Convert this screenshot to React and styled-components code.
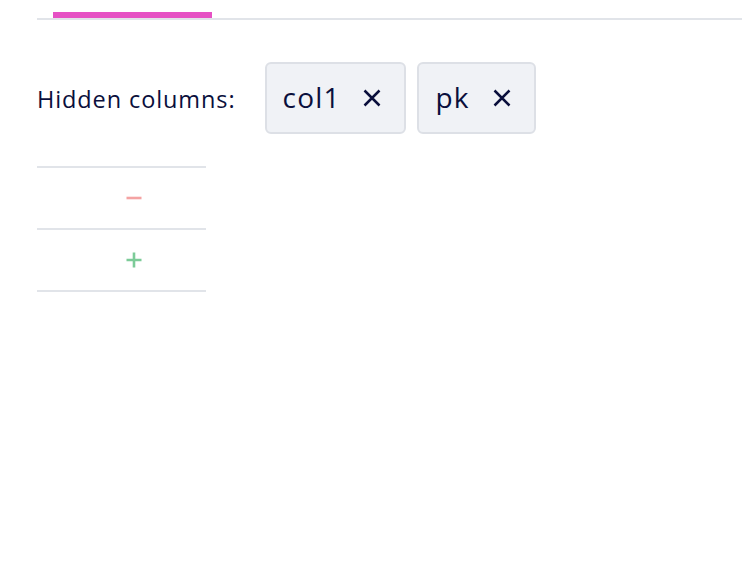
import React from "react";
import styled, { createGlobalStyle } from "styled-components";

const Global = createGlobalStyle`
	body {
		margin: 0;
		background: #fff;
		font-family: "Source Sans Pro", "Open Sans", "Noto Sans", sans-serif;
		color: #0a0f3c;
	}
`;

const S = {};
S.page = styled.div`
	width: 742px;
	height: 588px;
	padding-left: 37px;
	box-sizing: border-box;
	overflow: hidden;
`;
// tab header strip
S.tabBar = styled.div`
	display: flex;
	height: 20px;
	padding-left: 16px;
	border-bottom: 2px solid #e1e4e9;
	box-sizing: border-box;
	align-items: flex-end;
`;
S.tabIndicator = styled.div`
	width: 159px;
	height: 6px;
	background: #e651c4;
`;
S.hiddenRow = styled.div`
	display: flex;
	align-items: center;
	gap: 11px;
	margin-top: 42px;
`;
S.label = styled.span`
	font-size: 23.5px;
	letter-spacing: 0.9px;
	margin-right: 18px;
	padding-top: 1px;
`;
S.chip = styled.div`
	display: flex;
	align-items: center;
	height: 72px;
	box-sizing: border-box;
	padding: 0 23px 0 16px;
	gap: 24px;
	background: #f0f2f6;
	border: 2px solid #dde0e6;
	border-radius: 6px;
	font-size: 28px;
	letter-spacing: 1.2px;
`;
S.chipText = styled.span`
	margin-right: -1.2px;
	padding-bottom: 3px;
`;
S.close = styled.svg`
	width: 18px;
	height: 18px;
	display: block;
`;
S.table = styled.div`
	width: 169px;
	margin-top: 32px;
	border-top: 2px solid #e1e4e9;
`;
S.row = styled.div`
	display: flex;
	align-items: center;
	justify-content: center;
	height: 60px;
	border-bottom: 2px solid #e1e4e9;
	padding-left: 24px;
`;
S.sign = styled.svg`
	width: 16px;
	height: 16px;
	display: block;
`;

function Chip({ name }) {
	return (
		<S.chip>
			<S.chipText>{name}</S.chipText>
			<S.close viewBox="0 0 18 18">
				<path d="M1.5 1.5L16.5 16.5M16.5 1.5L1.5 16.5" stroke="#0a0f3c" strokeWidth="2.5" />
			</S.close>
		</S.chip>
	);
}

function App() {
	return (
		<>
			<Global />
			<S.page>
				<S.tabBar>
					<S.tabIndicator />
				</S.tabBar>
				<S.hiddenRow>
					<S.label>Hidden columns:</S.label>
					<Chip name="col1" />
					<Chip name="pk" />
				</S.hiddenRow>
				<S.table>
					<S.row>
						<S.sign viewBox="0 0 16 16">
							<path d="M0.5 8H15.5" stroke="#f4a3a3" strokeWidth="2.6" />
						</S.sign>
					</S.row>
					<S.row>
						<S.sign viewBox="0 0 16 16">
							<path d="M0.5 8H15.5M8 0.5V15.5" stroke="#7ccb98" strokeWidth="2.6" />
						</S.sign>
					</S.row>
				</S.table>
			</S.page>
		</>
	);
}

export default App;
